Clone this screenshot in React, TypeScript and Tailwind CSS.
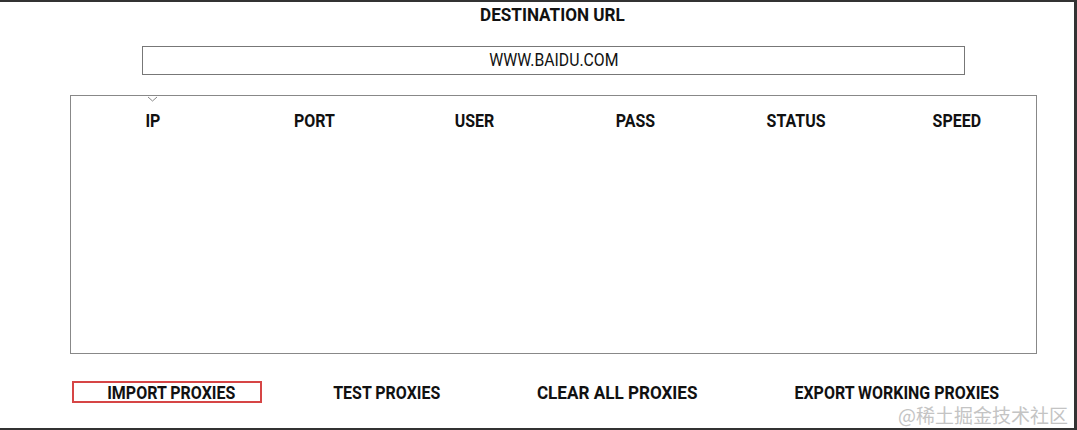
const COLUMNS = ["IP", "PORT", "USER", "PASS", "STATUS", "SPEED"];

const font = { fontFamily: 'Roboto, "DejaVu Sans Condensed", sans-serif' };

// condensed look of the original typeface
function Narrow({ children, wide }: { children: React.ReactNode; wide?: boolean }) {
  return (
    <span
      className={
        wide
          ? "inline-block origin-center scale-x-[0.9] whitespace-nowrap"
          : "inline-block origin-center scale-x-[0.84] whitespace-nowrap"
      }
    >
      {children}
    </span>
  );
}

export default function App() {
  return (
    <div
      className="relative w-[1077px] h-[430px] bg-white border-t-2 border-r-[3px] border-b-2 border-[#333] text-[#111] overflow-hidden"
      style={font}
    >
      {/* Title */}
      <div className="h-[24px] pl-[31px] flex items-center justify-center">
        <h1 className="text-[19px] font-bold leading-none">
          <Narrow wide>DESTINATION URL</Narrow>
        </h1>
      </div>

      {/* URL field */}
      <div className="mt-[20px] ml-[142px] w-[823px] h-[29px] border border-[#777] flex items-center justify-center">
        <span className="text-[19px] leading-none pb-[2px]">
          <span className="inline-block origin-center scale-x-[0.83] whitespace-nowrap">WWW.BAIDU.COM</span>
        </span>
      </div>

      {/* Proxy table */}
      <div className="relative mt-[20px] ml-[70px] w-[967px] h-[259px] border border-[#888]">
        <svg className="absolute left-[76px] top-[0px]" width="11" height="6" viewBox="0 0 11 6">
          <path d="M1 1 L5.5 5 L10 1" fill="none" stroke="#888" strokeWidth="1" />
        </svg>
        <div className="grid grid-cols-6 w-[966px] pl-[2px] pt-[15px]">
          {COLUMNS.map((c) => (
            <div key={c} className="text-center text-[19px] font-bold leading-none">
              <Narrow>{c}</Narrow>
            </div>
          ))}
        </div>
      </div>

      {/* Actions */}
      <div className="mt-[27px] ml-[72px] flex items-center text-[19px] font-bold leading-none">
        <button className="w-[190px] h-[22px] border-2 border-[#d64545] pl-[8px] text-center">
          <Narrow>IMPORT PROXIES</Narrow>
        </button>
        <button className="w-[250px] text-center">
          <Narrow>TEST PROXIES</Narrow>
        </button>
        <button className="w-[210px] text-center">
          <Narrow wide>CLEAR ALL PROXIES</Narrow>
        </button>
        <button className="w-[350px] text-center">
          <Narrow>EXPORT WORKING PROXIES</Narrow>
        </button>
      </div>

      {/* Watermark */}
      <div
        className="absolute right-[6px] bottom-[4px] text-[19px] text-[#c4c4c4] leading-none"
        style={{ fontFamily: '"Noto Sans CJK SC", sans-serif' }}
      >
        @稀土掘金技术社区
      </div>
    </div>
  );
}
